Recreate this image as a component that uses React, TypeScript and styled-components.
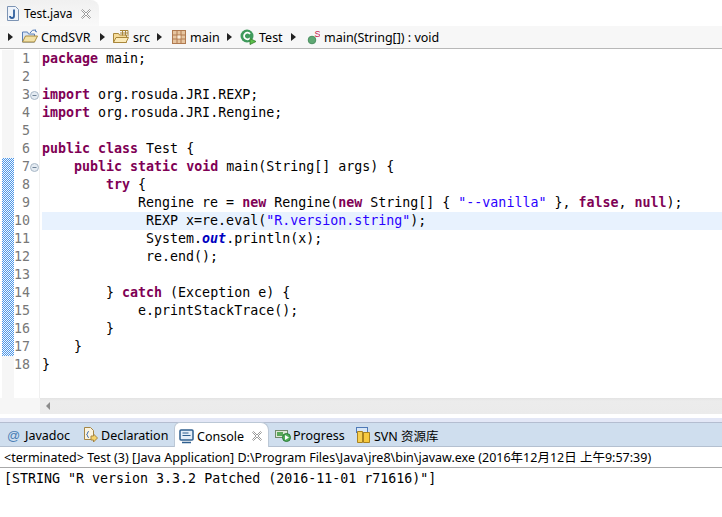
import React from 'react';
import styled, { createGlobalStyle } from 'styled-components';

const GlobalStyle = createGlobalStyle`
  html, body {
    margin: 0;
    padding: 0;
    background: #fff;
  }
`;

const uiFont = `"Noto Sans", "Noto Sans CJK SC", sans-serif`;
const monoFont = `"DejaVu Sans Mono", monospace`;

const Root = styled.div`
  width: 722px;
  height: 517px;
  overflow: hidden;
  display: flex;
  flex-direction: column;
  background: #fff;
  font-family: ${uiFont};
  font-size: 12px;
  color: #000;
`;

const EditorTabBar = styled.div`
  height: 26px;
  flex: none;
  display: flex;
  align-items: flex-end;
  background: #fff;
`;

const EditorTab = styled.div`
  width: 99px;
  height: 26px;
  box-sizing: border-box;
  padding: 1px 0 0 7px;
  display: flex;
  align-items: center;
  gap: 5px;
  background: linear-gradient(#f0f0f0, #f9f9f9);
  border-top-right-radius: 8px;
  font-size: 12px;
`;

const Breadcrumb = styled.div`
  height: 23px;
  flex: none;
  box-sizing: border-box;
  display: flex;
  align-items: center;
  background: #f7f7f7;
  border-bottom: 1px solid #b8b8b8;
  padding-left: 8px;
  font-size: 12.5px;
`;

const Crumb = styled.span<{ $iconGap: number; $gap: number }>`
  display: inline-flex;
  align-items: center;
  gap: ${(props) => props.$iconGap}px;
  margin-left: ${(props) => props.$gap}px;
`;

const CrumbLabel = styled.span<{ $width: number }>`
  width: ${(props) => props.$width}px;
  white-space: nowrap;
`;

const Arrow = styled.span<{ $gap?: number }>`
  width: 0;
  height: 0;
  margin-left: ${(props) => props.$gap ?? 0}px;
  border-left: 5px solid #222;
  border-top: 4.5px solid transparent;
  border-bottom: 4.5px solid transparent;
`;

const Editor = styled.div`
  flex: 1;
  min-height: 0;
  display: flex;
  flex-direction: column;
  padding-top: 1px;
`;

const Line = styled.div`
  height: 18px;
  flex: none;
  display: flex;
`;

const Ruler = styled.div`
  width: 40px;
  flex: none;
  box-sizing: border-box;
  display: flex;
  padding-left: 2px;
  border-right: 1px solid #f0f0f0;
  background: #fff;
`;

const ChangeBar = styled.span<{ $changed?: boolean }>`
  width: 12px;
  flex: none;
  background: ${(props) =>
    props.$changed
      ? 'repeating-conic-gradient(#4c96e8 0 25%, #f4f9fe 0 50%) 0 0 / 2px 2px'
      : '#f6f6f6'};
`;

const LineNumber = styled.span`
  width: 16px;
  flex: none;
  text-align: right;
  font-family: ${monoFont};
  font-size: 13.3px;
  line-height: 18px;
  color: #787878;
`;

const Fold = styled.span`
  width: 9px;
  flex: none;
  display: flex;
  align-items: center;
  justify-content: center;
`;

const Code = styled.div<{ $active?: boolean }>`
  flex: 1;
  margin-left: 2px;
  font-family: ${monoFont};
  font-size: 13.3px;
  line-height: 18px;
  white-space: pre;
  color: #000;
  background: ${(props) => (props.$active ? '#e8f2fe' : 'transparent')};
`;

const Keyword = styled.span`
  color: #7f0055;
  font-weight: bold;
`;

const Str = styled.span`
  color: #2a00ff;
`;

const StaticField = styled.span`
  color: #0000c0;
  font-style: italic;
  font-weight: bold;
`;

const RulerFill = styled.div`
  flex: 1;
  display: flex;
`;

const ScrollRow = styled.div`
  height: 16px;
  flex: none;
  display: flex;
  background: #f6f6f6;
`;

const ScrollTrack = styled.div`
  flex: 1;
  margin-left: 40px;
  display: flex;
  align-items: center;
  padding-left: 6px;
  background: linear-gradient(#e3e3e3, #ececec 3px, #ebebeb);
`;

const ScrollArrow = styled.span`
  width: 0;
  height: 0;
  border-right: 4px solid #8c8c8c;
  border-top: 4px solid transparent;
  border-bottom: 4px solid transparent;
`;

const Gap = styled.div`
  height: 4px;
  flex: none;
  background: #fff;
`;

const ConsolePane = styled.div`
  height: 99px;
  flex: none;
  display: flex;
  flex-direction: column;
  background: #fff;
`;

const ViewTabBar = styled.div`
  height: 29px;
  flex: none;
  box-sizing: border-box;
  display: flex;
  align-items: flex-end;
  padding-left: 5px;
  background: #cfdeee;
  border-top: 4px solid #e3e7f6;
  border-bottom: 1px solid #b4c0d0;
  box-shadow: inset 0 1px 0 #b4bdd0;
`;

const ViewTab = styled.div<{ $selected?: boolean; $width: number; $pad: number; $iconGap?: number }>`
  width: ${(props) => props.$width}px;
  height: ${(props) => (props.$selected ? 25 : 24)}px;
  box-sizing: border-box;
  display: flex;
  align-items: center;
  gap: ${(props) => props.$iconGap ?? 3}px;
  padding: 2px 0 0 ${(props) => props.$pad}px;
  background: ${(props) => (props.$selected ? '#fff' : 'transparent')};
  border: ${(props) => (props.$selected ? '1px solid #bcc8d6' : 'none')};
  border-bottom: none;
  border-top-left-radius: ${(props) => (props.$selected ? 6 : 0)}px;
  border-top-right-radius: ${(props) => (props.$selected ? 8 : 0)}px;
  margin-bottom: ${(props) => (props.$selected ? -1 : 0)}px;
  font-size: 12.5px;
  white-space: nowrap;
`;

const CloseMark = styled.svg<{ $gap: number }>`
  margin-left: ${(props) => props.$gap}px;
  flex: none;
`;

const StatusLine = styled.div`
  height: 21px;
  flex: none;
  box-sizing: border-box;
  padding: 1px 0 0 4px;
  border-bottom: 1px solid #a8a8a8;
  font-size: 12.5px;
  line-height: 20px;
  white-space: pre;
`;

const Output = styled.div`
  padding: 2px 0 0 4px;
  font-family: ${monoFont};
  font-size: 13.3px;
  line-height: 18px;
  white-space: pre;
  color: #000;
`;

const CloseIcon = ({ gap }: { gap: number }) => (
  <CloseMark $gap={gap} width="10" height="10" viewBox="0 0 10 10" fill="#fff" stroke="#9a9a9a">
    <path d="M.5 1.500l1-1L5 4 8.500.5l1 1L6 5l3.500 3.500-1 1L5 6 1.500 9.500l-1-1L4 5z" />
  </CloseMark>
);

const JavaFileIcon = () => (
  <svg width="12" height="15" viewBox="0 0 12 15">
    <path d="M.5.5h8l3 3v11H.5z" fill="#eef3fa" stroke="#7d94b4" />
    <path d="M7 3.500v6.500q0 2-2 2t-2-2" fill="none" stroke="#2f5f9e" strokeWidth="1.800" />
  </svg>
);

const ProjectIcon = () => (
  <svg width="16" height="16" viewBox="0 0 16 16">
    <path d="M.5 13V3h5l1 2h6v8z" fill="#dbe6f5" stroke="#5a7fb5" />
    <path d="M.5 13l3-6h12l-3 6z" fill="#f2e2a8" stroke="#a98b3f" />
    <path d="M8 4q2-4 6-3l-1 1 2 1" fill="none" stroke="#4f79b7" />
  </svg>
);

const SourceIcon = () => (
  <svg width="16" height="14" viewBox="0 0 16 14">
    <path d="M.5 12.500V3.500h5l1 1.500h7v7.500z" fill="#f6dc9a" stroke="#a9873c" />
    <path d="M.5 12.500l2.500-5h12.500l-2.500 5z" fill="#fbeab8" stroke="#a9873c" />
    <path d="M7 .5h8v6M9.500.5v5M12.500.5v5M7 3h8" fill="none" stroke="#a9873c" />
  </svg>
);

const PackageIcon = () => (
  <svg width="14" height="14" viewBox="0 0 14 14">
    <rect x=".5" y=".5" width="13" height="13" fill="#e6c5a0" stroke="#b07a50" />
    <path d="M5 .5v13M9 .5v13M.5 5h13M.5 9h13" stroke="#b07a50" />
    <rect x="5.500" y="5.500" width="3" height="3" fill="#f8ead8" />
  </svg>
);

const ClassIcon = () => (
  <svg width="17" height="16" viewBox="0 0 17 16">
    <circle cx="7" cy="7" r="6.500" fill="#3f9a5c" />
    <path d="M10 5a3.300 3.300 0 1 0 0 4" fill="none" stroke="#fff" strokeWidth="1.800" />
    <path d="M10 9.500l6 3-6 3z" fill="#5cc04a" stroke="#2d7a2a" strokeWidth=".8" />
  </svg>
);

const MethodIcon = () => (
  <svg width="13" height="15" viewBox="0 0 13 15">
    <circle cx="5" cy="10" r="3.800" fill="#5fa873" stroke="#4a8f60" />
    <text x="7.500" y="7" fontSize="9" fontFamily="Liberation Sans, sans-serif" fill="#c8174a">
      S
    </text>
  </svg>
);

const JavadocIcon = () => (
  <svg width="15" height="14" viewBox="0 0 15 14">
    <text x="0" y="11.500" fontSize="13" fontFamily="Liberation Sans, sans-serif" fill="#4a7fb5">
      @
    </text>
  </svg>
);

const DeclarationIcon = () => (
  <svg width="16" height="17" viewBox="0 0 16 17">
    <path d="M2.500.5h6l3 3v9h-9z" fill="#fbf3df" stroke="#a58544" />
    <path d="M7 4.500q-1.500 0-1.500 1.500t-1 1.500q1 0 1 1.500t1.500 1.500" fill="none" stroke="#4f79b7" />
    <path d="M9 9h2.500V7l4 4-4 4v-2H9z" fill="#f6d36a" stroke="#a58544" />
  </svg>
);

const ConsoleIcon = () => (
  <svg width="15" height="15" viewBox="0 0 15 15">
    <rect x="1" y="1" width="13" height="10" rx="1" fill="#e6eef8" stroke="#2f5f8f" strokeWidth="1.500" />
    <path d="M3.500 4h6M3.500 6.500h8" stroke="#2f5f8f" />
    <path d="M3 13.500h9" stroke="#2f5f8f" strokeWidth="1.500" />
  </svg>
);

const ProgressIcon = () => (
  <svg width="16" height="14" viewBox="0 0 16 14">
    <rect x=".5" y="2.500" width="12" height="7" fill="#dfe8d8" stroke="#6f8a6a" />
    <rect x="2" y="4" width="6" height="4" fill="#5aa85a" />
    <circle cx="11.500" cy="9.500" r="4" fill="#4fae58" stroke="#2d7a3a" />
    <path d="M10 7l4 2.500-4 2.500z" fill="#fff" />
  </svg>
);

const SvnIcon = () => (
  <svg width="15" height="17" viewBox="0 0 15 17">
    <rect x=".5" y=".5" width="11" height="5" fill="#d8e6f5" stroke="#4f79b7" />
    <path d="M1.500 4.500h5v11h-5z" fill="#f7cf50" stroke="#a9821f" />
    <path d="M7.500 5.500h6v10h-6z" fill="#f7c93e" stroke="#a9821f" />
  </svg>
);

const FoldIcon = () => (
  <svg width="9" height="9" viewBox="0 0 9 9">
    <circle cx="4.500" cy="4.500" r="4" fill="#e4ebf2" stroke="#a9b8c6" />
    <path d="M2.500 4.500h4" stroke="#6f8296" />
  </svg>
);

const source: { text: React.ReactNode; fold?: boolean; changed?: boolean; active?: boolean }[] = [
  { text: <><Keyword>package</Keyword> main;</> },
  { text: '' },
  { text: <><Keyword>import</Keyword> org.rosuda.JRI.REXP;</>, fold: true },
  { text: <><Keyword>import</Keyword> org.rosuda.JRI.Rengine;</> },
  { text: '' },
  { text: <><Keyword>public</Keyword> <Keyword>class</Keyword> Test {'{'}</> },
  {
    text: <>    <Keyword>public</Keyword> <Keyword>static</Keyword> <Keyword>void</Keyword> main(String[] args) {'{'}</>,
    fold: true,
    changed: true,
  },
  { text: <>        <Keyword>try</Keyword> {'{'}</>, changed: true },
  {
    text: (
      <>
        {'            Rengine re = '}
        <Keyword>new</Keyword> Rengine(<Keyword>new</Keyword> String[] {'{ '}
        <Str>"--vanilla"</Str> {'}, '}
        <Keyword>false</Keyword>, <Keyword>null</Keyword>);
      </>
    ),
    changed: true,
  },
  { text: <>             REXP x=re.eval(<Str>"R.version.string"</Str>);</>, changed: true, active: true },
  { text: <>             System.<StaticField>out</StaticField>.println(x);</>, changed: true },
  { text: '             re.end();', changed: true },
  { text: '', changed: true },
  { text: <>        {'} '}<Keyword>catch</Keyword> (Exception e) {'{'}</>, changed: true },
  { text: '            e.printStackTrace();', changed: true },
  { text: '        }', changed: true },
  { text: '    }', changed: true },
  { text: '}' },
];

export default function App() {
  return (
    <Root>
      <GlobalStyle />
      <EditorTabBar>
        <EditorTab>
          <JavaFileIcon />
          Test.java
          <CloseIcon gap={3} />
        </EditorTab>
      </EditorTabBar>
      <Breadcrumb>
        <Arrow />
        <Crumb $gap={9} $iconGap={3}>
          <ProjectIcon />
          <CrumbLabel $width={50}>CmdSVR</CrumbLabel>
        </Crumb>
        <Arrow $gap={9} />
        <Crumb $gap={8} $iconGap={4}>
          <SourceIcon />
          <CrumbLabel $width={16}>src</CrumbLabel>
        </Crumb>
        <Arrow $gap={8} />
        <Crumb $gap={10} $iconGap={4}>
          <PackageIcon />
          <CrumbLabel $width={28}>main</CrumbLabel>
        </Crumb>
        <Arrow $gap={9} />
        <Crumb $gap={8} $iconGap={2}>
          <ClassIcon />
          <CrumbLabel $width={24}>Test</CrumbLabel>
        </Crumb>
        <Arrow $gap={8} />
        <Crumb $gap={11} $iconGap={4}>
          <MethodIcon />
          <CrumbLabel $width={114}>main(String[]) : void</CrumbLabel>
        </Crumb>
      </Breadcrumb>
      <Editor>
        {source.map((line, index) => (
          <Line key={index}>
            <Ruler>
              <ChangeBar $changed={line.changed} />
              <LineNumber>{index + 1}</LineNumber>
              <Fold>{line.fold && <FoldIcon />}</Fold>
            </Ruler>
            <Code $active={line.active}>{line.text}</Code>
          </Line>
        ))}
        <RulerFill>
          <Ruler>
            <ChangeBar />
          </Ruler>
        </RulerFill>
      </Editor>
      <ScrollRow>
        <ScrollTrack>
          <ScrollArrow />
        </ScrollTrack>
      </ScrollRow>
      <Gap />
      <ConsolePane>
        <ViewTabBar>
          <ViewTab $width={75} $pad={2}>
            <JavadocIcon />
            Javadoc
          </ViewTab>
          <ViewTab $width={94} $pad={2}>
            <DeclarationIcon />
            Declaration
          </ViewTab>
          <ViewTab $selected $width={95} $pad={4}>
            <ConsoleIcon />
            Console
            <CloseIcon gap={5} />
          </ViewTab>
          <ViewTab $width={87} $pad={6} $iconGap={2}>
            <ProgressIcon />
            Progress
          </ViewTab>
          <ViewTab $width={90} $pad={0}>
            <SvnIcon />
            SVN 资源库
          </ViewTab>
        </ViewTabBar>
        <StatusLine>{'<terminated> Test (3) [Java Application] D:\\Program Files\\Java\\jre8\\bin\\javaw.exe (2016年12月12日 上午9:57:39)'}</StatusLine>
        <Output>[STRING "R version 3.3.2 Patched (2016-11-01 r71616)"]</Output>
      </ConsolePane>
    </Root>
  );
}
